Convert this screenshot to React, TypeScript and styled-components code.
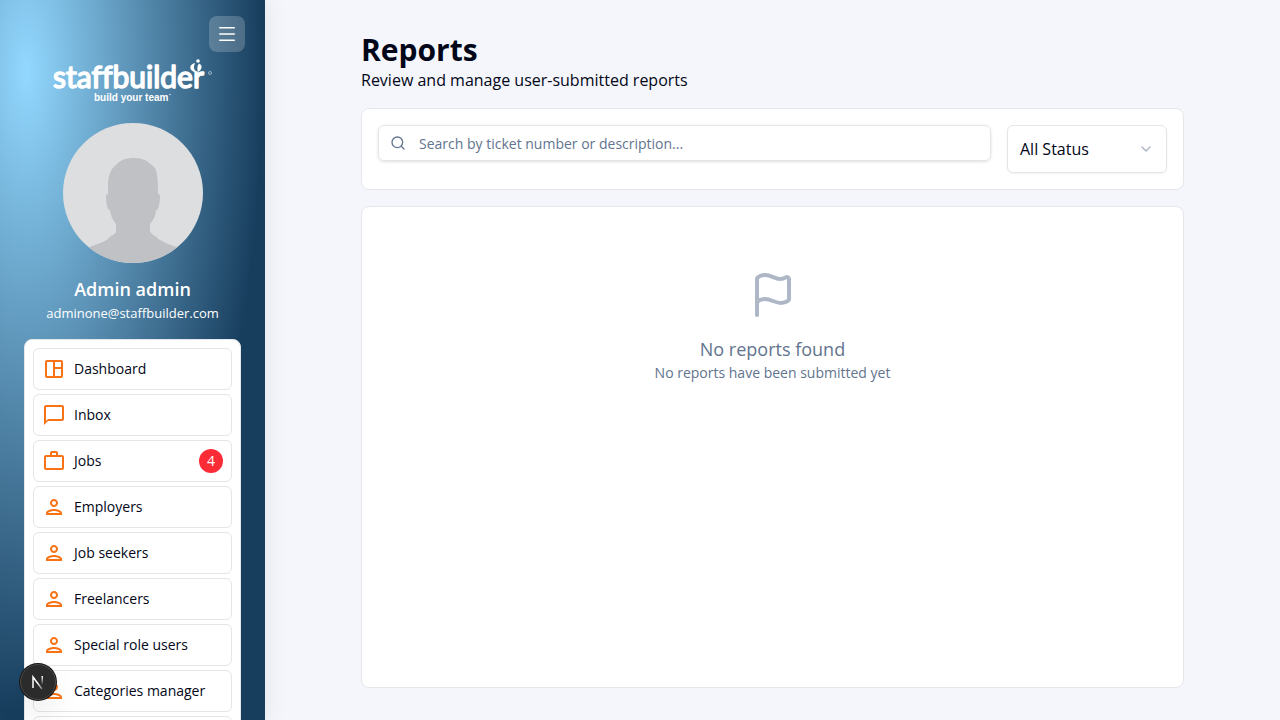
import React from "react";
import styled, { createGlobalStyle } from "styled-components";
import { ChevronDown, Flag, Search } from "lucide-react";
import {
  MdChatBubbleOutline,
  MdOutlinePerson,
  MdOutlineSpaceDashboard,
  MdWorkOutline,
} from "react-icons/md";

const GlobalStyle = createGlobalStyle`
  *, *::before, *::after { box-sizing: border-box; }
  body {
    margin: 0;
    background: #f5f6fb;
    color: #020618;
    font-family: "Open Sans", "Noto Sans", sans-serif;
    font-size: 16px;
    line-height: 24px;
  }
  h1, h2, p, ul { margin: 0; padding: 0; }
  button, input, select { font: inherit; color: inherit; }
`;

const Shell = styled.div`
  display: flex;
  height: 100vh;
  overflow: hidden;
`;

const Sidebar = styled.aside`
  display: flex;
  flex-direction: column;
  flex: none;
  width: 265px;
  padding: 16px 24px 0;
  overflow-y: auto;
  scrollbar-width: none;
  background: radial-gradient(at 10% 10%, #93d8ff 0%, #183e5e 70%);
  box-shadow: 0 0 24px rgba(0, 0, 0, 0.08);
  color: #fff;
`;

const MenuButton = styled.button`
  display: grid;
  place-items: center;
  flex: none;
  align-self: flex-end;
  width: 36px;
  height: 36px;
  margin-right: -4px;
  padding: 0;
  border: 0;
  border-radius: 8px;
  background: rgba(255, 255, 255, 0.2);
`;

const Logo = styled.a`
  display: flex;
  flex: none;
  justify-content: center;
  margin: 6px 0 20px;
`;

const LogoName = styled.text`
  font: 400 30px Lato, sans-serif;
  font-variant-ligatures: none;
  stroke: #fff;
  stroke-width: 1.5px;
  stroke-linejoin: round;
`;

const LogoTagline = styled.text`
  font: 700 10px "Liberation Sans", sans-serif;
`;

const Profile = styled.div`
  display: flex;
  flex: none;
  flex-direction: column;
  align-items: center;
  margin-bottom: 16px;
`;

const Avatar = styled.svg`
  margin-bottom: 12px;
  border-radius: 50%;
`;

const UserName = styled.p`
  font-size: 18px;
  font-weight: 600;
  line-height: 28px;
`;

const UserMail = styled.p`
  font-size: 13px;
  line-height: 20px;
`;

const NavList = styled.ul`
  display: flex;
  flex: none;
  flex-direction: column;
  gap: 4px;
  padding: 8px;
  border: 1px solid #e5e7eb;
  border-radius: 8px;
  background: #fff;
  list-style: none;
`;

const NavLink = styled.a`
  display: flex;
  align-items: center;
  gap: 8px;
  height: 42px;
  padding: 0 8px;
  border: 1px solid #e5e5e5;
  border-radius: 6px;
  color: #020618;
  font-size: 14px;
  font-weight: 500;
  text-decoration: none;

  svg { flex: none; color: #f97316; }
`;

const Count = styled.span`
  width: 24px;
  margin-left: auto;
  border-radius: 50%;
  background: #fb2c36;
  color: #fff;
  font-weight: 400;
  text-align: center;
`;

const Main = styled.main`
  display: flex;
  flex: 1;
  flex-direction: column;
  gap: 16px;
  min-width: 0;
  padding: 32px 96px;
`;

const Title = styled.h1`
  font-size: 30px;
  font-weight: 700;
  line-height: 36px;
`;

const Panel = styled.section`
  border: 1px solid #e5e7eb;
  border-radius: 8px;
  background: #fff;
`;

const Filters = styled(Panel)`
  display: flex;
  align-items: flex-start;
  gap: 16px;
  padding: 16px;
`;

const SearchField = styled.label`
  display: flex;
  flex: 1;
  align-items: center;
  gap: 13px;
  height: 36px;
  padding: 0 11px;
  border: 1px solid #e5e5e5;
  border-radius: 6px;
  box-shadow: 0 1px 3px rgba(0, 0, 0, 0.12);
  color: #62748e;
`;

const SearchInput = styled.input`
  flex: 1;
  min-width: 0;
  padding: 2px 0 0;
  border: 0;
  outline: 0;
  background: transparent;
  font-size: 14px;

  &::placeholder { color: #62748e; opacity: 1; }
`;

const SelectField = styled.div`
  display: grid;
  align-items: center;
  width: 160px;

  > * { grid-area: 1 / 1; }
  svg { justify-self: end; margin-right: 13px; color: #a9b3c1; pointer-events: none; }
`;

const StatusSelect = styled.select`
  appearance: none;
  width: 100%;
  height: 48px;
  padding: 0 12px;
  border: 1px solid #e5e5e5;
  border-radius: 6px;
  background: #fff;
  box-shadow: 0 1px 2px rgba(0, 0, 0, 0.05);
`;

const Results = styled(Panel)`
  display: flex;
  flex: 1;
  flex-direction: column;
  align-items: center;
  padding-top: 64px;
  color: #62748e;
  text-align: center;

  svg { margin-bottom: 16px; color: #adb7c6; }
`;

const EmptyTitle = styled.h2`
  font-size: 18px;
  font-weight: 500;
  line-height: 28px;
`;

const EmptyText = styled.p`
  font-size: 14px;
  line-height: 20px;
`;

const DevBadge = styled.button`
  position: fixed;
  bottom: 20px;
  left: 20px;
  display: grid;
  place-items: center;
  width: 36px;
  height: 36px;
  padding: 0;
  border: 1px solid #4a4a4a;
  border-radius: 50%;
  background: #2b2b2b;
  box-shadow: 0 0 0 1px #171717, 0 16px 32px -8px rgba(0, 0, 0, 0.24);
`;

const navItems = [
  { label: "Dashboard", icon: MdOutlineSpaceDashboard },
  { label: "Inbox", icon: MdChatBubbleOutline },
  { label: "Jobs", icon: MdWorkOutline, count: 4 },
  { label: "Employers", icon: MdOutlinePerson },
  { label: "Job seekers", icon: MdOutlinePerson },
  { label: "Freelancers", icon: MdOutlinePerson },
  { label: "Special role users", icon: MdOutlinePerson },
  { label: "Categories manager", icon: MdOutlinePerson },
  { label: "Reports", icon: MdOutlinePerson },
];

export default function App() {
  return (
    <>
      <GlobalStyle />
      <Shell>
        <Sidebar>
          <MenuButton aria-label="Toggle menu">
            <svg width="24" height="24" viewBox="0 0 24 24" fill="none" stroke="#fff" strokeWidth="1.5" strokeLinecap="round">
              <path d="M4.750 5.750h14.500M4.750 12h14.500M4.750 18.250h14.500" />
            </svg>
          </MenuButton>
          <Logo href="#" aria-label="staffbuilder home">
            <svg width="160" height="45" viewBox="0 0 160 45" fill="#fff">
              <LogoName x="0" y="30">staffbuilder</LogoName>
              <circle cx="145" cy="3" r="1.800" />
              <path d="M142 5C137 6 135 11 141 14C143 14 144 13 143 13C140 11 141 8 142 5Z" />
              <path d="M146 5.500C150 7 149 12 145 14C144 11 144 8 146 5.500Z" />
              <circle cx="157" cy="15" r="1.500" fill="none" stroke="#fff" strokeOpacity=".7" strokeWidth=".7" />
              <LogoTagline x="41" y="43">build your team</LogoTagline>
              <path d="M116 36h2v1h-2z" fillOpacity=".6" />
            </svg>
          </Logo>
          <Profile>
            <Avatar width="140" height="140" viewBox="0 0 140 140" role="img" aria-label="Admin admin">
              <path fill="#dddee0" d="M0 0h140v140H0z" />
              <path
                fill="#c0c1c4"
                d="M71 35C62 35 58 37 54 41C47 46 45 54 45 62V71L43 72C43 79 44 87 47 87C48 94 50 97 53 101V109C52 112 46 113 45 116C39 120 32 122 26 124L18 140H122L114 124C106 122 101 119 95 116C94 113 88 112 87 108V101C91 96 93 92 93 87C96 87 97 79 97 72L95 71C95 59 95 48 91 44C89 41 86 41 84 38C80 36 76 35 71 35Z"
              />
            </Avatar>
            <UserName>Admin admin</UserName>
            <UserMail>adminone@staffbuilder.com</UserMail>
          </Profile>
          <nav aria-label="Main">
            <NavList>
              {navItems.map(({ label, icon: Icon, count }) => (
                <li key={label}>
                  <NavLink href="#">
                    <Icon size={24} />
                    {label}
                    {count && <Count>{count}</Count>}
                  </NavLink>
                </li>
              ))}
            </NavList>
          </nav>
        </Sidebar>
        <Main>
          <header>
            <Title>Reports</Title>
            <p>Review and manage user-submitted reports</p>
          </header>
          <Filters aria-label="Filters">
            <SearchField>
              <Search size={16} />
              <SearchInput
                type="text"
                aria-label="Search reports"
                placeholder="Search by ticket number or description..."
              />
            </SearchField>
            <SelectField>
              <StatusSelect aria-label="Status">
                <option>All Status</option>
              </StatusSelect>
              <ChevronDown size={16} />
            </SelectField>
          </Filters>
          <Results>
            <Flag size={48} />
            <EmptyTitle>No reports found</EmptyTitle>
            <EmptyText>No reports have been submitted yet</EmptyText>
          </Results>
        </Main>
      </Shell>
      <DevBadge aria-label="Open developer tools">
        <svg width="16" height="16" viewBox="0 0 16 16" fill="none" strokeWidth="1.5">
          <defs>
            <linearGradient id="fade-diagonal" x1="8" y1="8" x2="15" y2="15" gradientUnits="userSpaceOnUse">
              <stop stopColor="#fff" />
              <stop offset="1" stopColor="#fff" stopOpacity="0.2" />
            </linearGradient>
            <linearGradient id="fade-stem" x1="0" y1="2" x2="0" y2="11" gradientUnits="userSpaceOnUse">
              <stop stopColor="#fff" />
              <stop offset="1" stopColor="#fff" stopOpacity="0" />
            </linearGradient>
          </defs>
          <path d="M3 14V3L12 15" stroke="url(#fade-diagonal)" />
          <path d="M11.500 2h1.500v9h-1.500z" fill="url(#fade-stem)" />
        </svg>
      </DevBadge>
    </>
  );
}
